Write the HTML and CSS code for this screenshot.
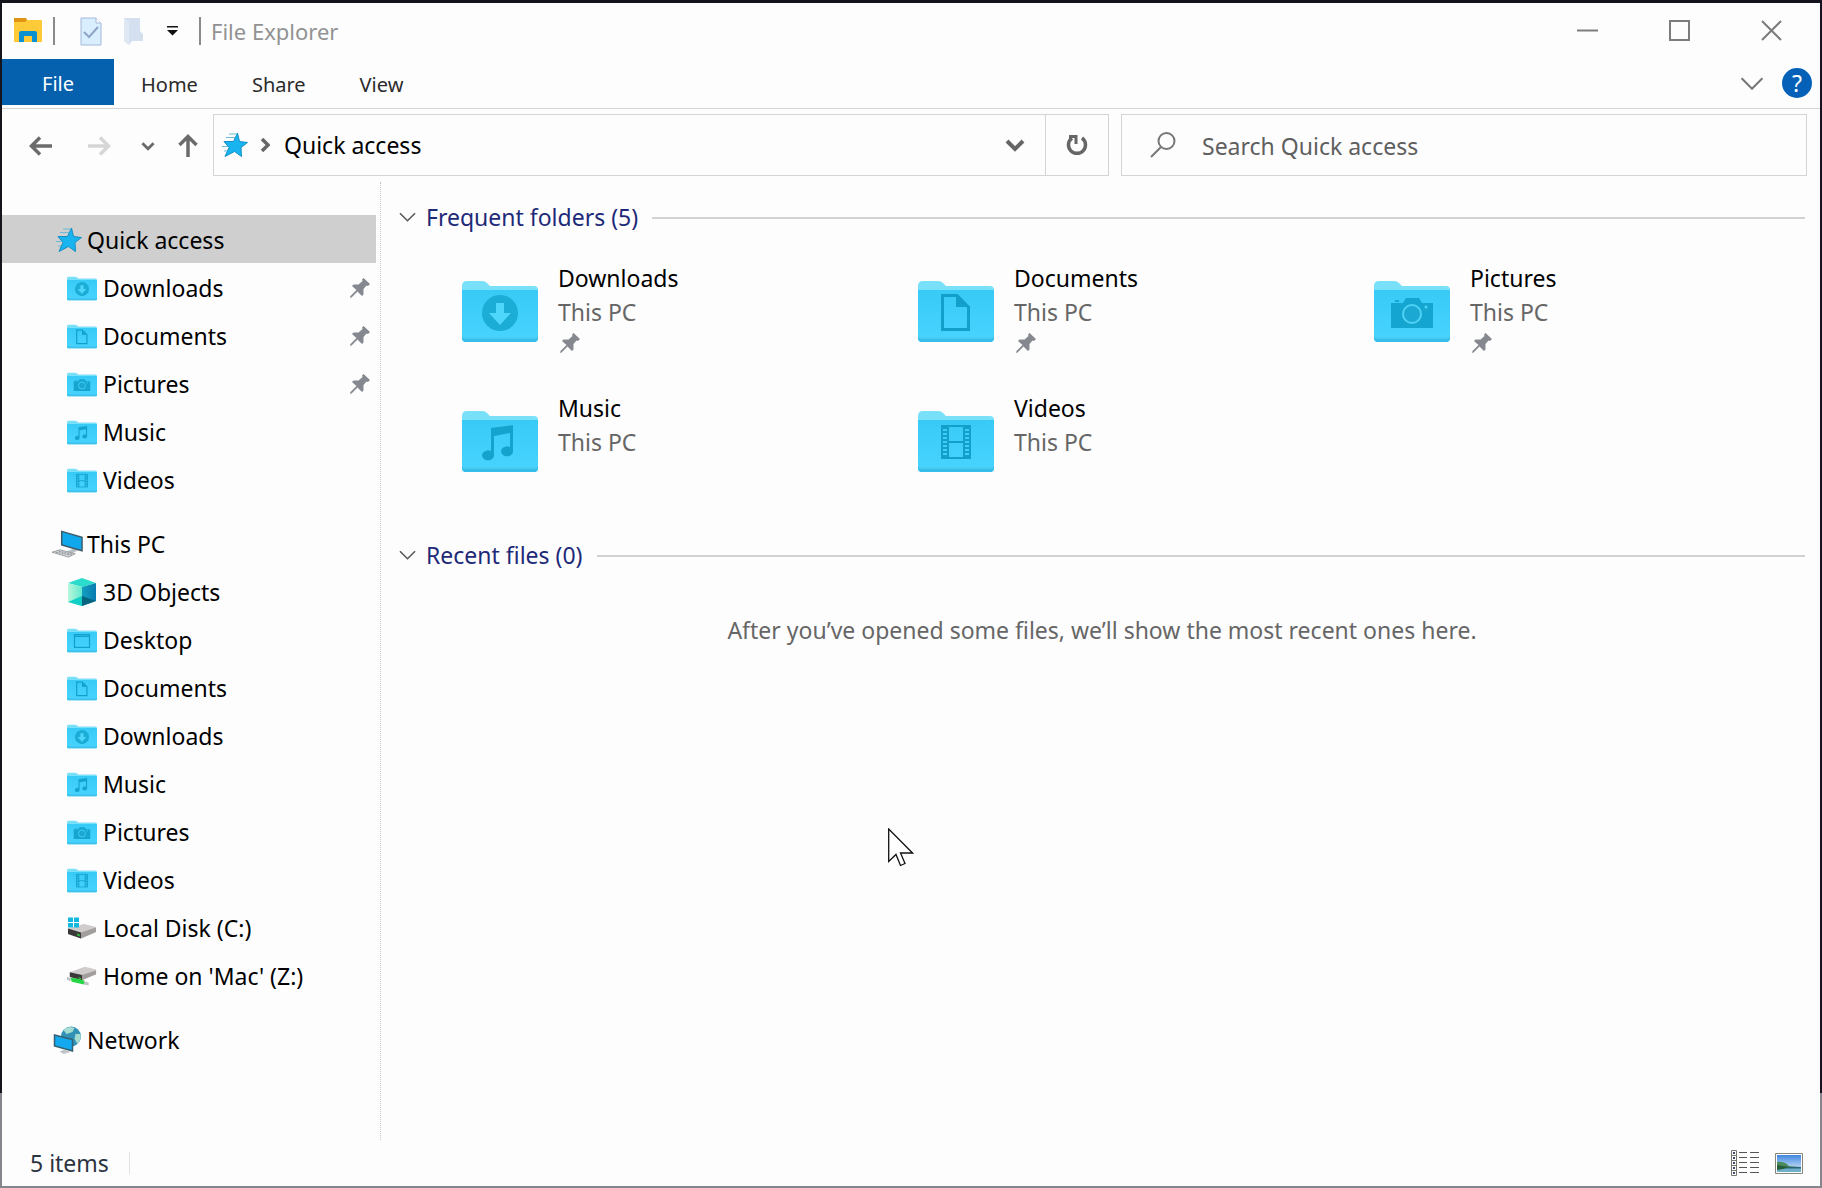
FILE: index.html
```html
<!DOCTYPE html>
<html lang="en">
<head>
<meta charset="utf-8">
<title>File Explorer</title>
<link rel="stylesheet" href="styles.css">
</head>
<body>
<svg class="defs" aria-hidden="true">
  <defs>
    <linearGradient id="front" x1="0" y1="0" x2="0" y2="1"><stop offset="0" stop-color="#38caf6"/><stop offset="1" stop-color="#48d4ff"/></linearGradient>
    <linearGradient id="sky" x1="0" y1="0" x2="0" y2="1"><stop offset="0" stop-color="#3f86e0"/><stop offset="1" stop-color="#e8f4fc"/></linearGradient>
    <linearGradient id="cubeL" x1="0" y1="0" x2="1" y2="0"><stop offset="0" stop-color="#b8f7dc"/><stop offset="1" stop-color="#63e9cf"/></linearGradient>
    <linearGradient id="cubeR" x1="0" y1="0" x2="1" y2="0"><stop offset="0" stop-color="#129fc0"/><stop offset="1" stop-color="#0a7bb0"/></linearGradient>
  </defs>
  <symbol id="folder" viewBox="0 0 76 61">
    <path d="M0 5Q0 0 5 0H20Q23 0 25 2L28 5H72Q76 5 76 9V30H0z" fill="#79e0fa"/>
    <path d="M0 9H76V57Q76 61 72 61H4Q0 61 0 57z" fill="url(#front)"/>
    <path d="M0 56H76V57Q76 61 72 61H4Q0 61 0 57z" fill="#36bdea"/>
    <path d="M1 57H75" stroke="#5bd9fb"/>
  </symbol>
  <symbol id="f-downloads" viewBox="0 0 76 61"><use href="#folder"/>
    <circle cx="38" cy="32" r="18" fill="#1badd6"/><path d="M34 22h8v10h7L38 44 27 32h7z" fill="#4fd6fb"/></symbol>
  <symbol id="f-documents" viewBox="0 0 76 61"><use href="#folder"/>
    <path d="M24.500 14.500H39L50.500 26V48.500H24.500z" fill="none" stroke="#129fca" stroke-width="3"/><path d="M38 15V26H50z" fill="#129fca"/></symbol>
  <symbol id="f-pictures" viewBox="0 0 76 61"><use href="#folder"/>
    <path d="M20 22H29L32 17H45L48 22H59V47H17V22zM21 19h4v2h-4z" fill="#14a6d0"/><circle cx="38" cy="33" r="9" fill="#1ba8d2" stroke="#4fd2f5" stroke-width="2"/><circle cx="52" cy="26" r="1.500" fill="#4fd2f5"/></symbol>
  <symbol id="f-music" viewBox="0 0 76 61"><use href="#folder"/>
    <path d="M29 17L51 14V41A6 5 0 1 1 48 36V22L32 25V45A6 5 0 1 1 29 40z" fill="#14a3cd"/></symbol>
  <symbol id="f-videos" viewBox="0 0 76 61"><use href="#folder"/>
    <path d="M24 15H52V47H24zM30 15V47M46 15V47M30 31H46" fill="none" stroke="#129fca" stroke-width="2"/><path d="M27 16V47M49 16V47" stroke="#129fca" stroke-width="6" stroke-dasharray="2 2"/></symbol>
  <symbol id="f-desktop" viewBox="0 0 76 61"><use href="#folder"/>
    <path d="M19 15.500H57V48H19zM19 20H57" fill="none" stroke="#129fca" stroke-width="3"/></symbol>
  <symbol id="pin" viewBox="0 0 20 20"><path d="M13.500 0L20 6 18 8 16.500 7.500 13.500 11 13.500 16.500 12 18 7.500 13.500 1.500 19.500 0 20 .5 18 6.500 12 2 8 3.500 6.500 8.500 6.500 12.500 3 12 1.500z" fill="#85898f"/></symbol>
  <symbol id="star" viewBox="0 0 28 26"><path d="M17.500 1L19.500 9.500 27.500 10.500 21 15.500 21.500 24.500 14.500 19.500 5 24.500 9 15.500 4 9.500H13.500z" fill="#19b4f0" stroke="#1190c4"/><path d="M9 2H17M6 5.500H15M2 14.500H8M4 19H7" stroke="#6bbbd9"/></symbol>
  <symbol id="pc" viewBox="0 0 32 28"><path d="M14 22L24 18 28 20 20 24z" fill="#b9bfc4"/><path d="M10 1L31 7V21L10 15z" fill="#10a8ec" stroke="#3f5866" stroke-width="1.500"/><path d="M0 22.500L8 20 24 24 17 27.500z" fill="#d3d6d8" stroke="#9a9fa3"/><path d="M4 22.500L20 25.500M7 21.500L21 24.500" stroke="#8e9499" stroke-dasharray="2 1"/></symbol>
  <symbol id="cube" viewBox="0 0 28 28"><path d="M14 0L28 5 14 9 0 5z" fill="#2bdbcb"/><path d="M0 5L14 9V28L0 24z" fill="url(#cubeL)"/><path d="M14 9L28 5V23L14 28z" fill="url(#cubeR)"/><path d="M0 24L14 18V28z" fill="#10cfc6"/><path d="M14 18L28 23 14 28z" fill="#07647f"/></symbol>
  <symbol id="disk" viewBox="0 0 30 22"><path d="M1 11.500L17 7 29 10V15L14 21.500 1 17z" fill="#cfcccb"/><path d="M1 11.500L14 15.500V21.500L1 17z" fill="#3a3838"/><path d="M14 15.500L29 10.500V15L14 21.500z" fill="#a19e9d"/><path d="M10 16.500l3 1v2l-3-1z" fill="#2fb93c"/><path d="M1 .5H6V5H1zM7 .5H12V5H7zM1 6H6V10.500H1zM7 6H12V10.500H7z" fill="#14b8de"/></symbol>
  <symbol id="netdisk" viewBox="0 0 32 22"><path d="M3 7L19 1 31 4V9L16 15 3 11z" fill="#cfcccb"/><path d="M3 7L16 10V15.500L3 12z" fill="#3a3838"/><path d="M16 10L31 5V9L16 15.500z" fill="#a19e9d"/><path d="M12 12l3 1v1.500l-3-1z" fill="#2fb93c"/><path d="M4 13L9 13.500 19 16 18 20 5 17z" fill="#22d643"/><path d="M0 12L4 13V16.500L0 15zM18 16.500L23 18V21L18 20z" fill="#bfc3bf"/></symbol>
  <symbol id="network" viewBox="0 0 28 28"><circle cx="17.500" cy="10.500" r="10" fill="#3192b5"/><path d="M10 4Q14-1 21 2L19 6 13 8zM22 8L27 8Q28 14 24 18L21 13z" fill="#a5dbd0"/><path d="M1 9L19 13.500V25L1 20z" fill="#12a9ee" stroke="#35606f" stroke-width="1.500"/><path d="M6 25.500L11 23.500 17 26 10 28z" fill="#bfc6ca"/></symbol>
  <symbol id="chev" viewBox="0 0 18 10"><path d="M1 1L9 9 17 1" fill="none" stroke="currentColor" stroke-width="1.600"/></symbol>
  <symbol id="chev-bold" viewBox="0 0 20 14"><path d="M2 3L10 11 18 3" fill="none" stroke="currentColor" stroke-width="4"/></symbol>
  <symbol id="arrow" viewBox="0 0 24 20"><path d="M23 10H3M11 1.500L2.500 10 11 18.500" fill="none" stroke="currentColor" stroke-width="3.500"/></symbol>
</svg>

<div class="window">
  <header class="titlebar">
    <svg class="app-icon" viewBox="0 0 28 26"><path d="M0 0H12L13 2H27Q28 2 28 3V24H0z" fill="#ffca38"/><path d="M0 0H12L13 2 11 4H0z" fill="#e09416"/><path d="M5 24V15Q5 13 7 13H21Q23 13 23 15V24H18V18H10V24z" fill="#0b91d2"/></svg>
    <span class="rule"></span>
    <button class="tool tool-properties" aria-label="Properties"><svg width="22" height="29" viewBox="0 0 22 29"><path d="M1 1H16L21 6V28H1z" fill="#d9efff" stroke="#a3b8d8"/><path d="M16 1V6H21" fill="#fff" stroke="#a3b8d8"/><path d="M4 15L9 20 18 10" fill="none" stroke="#8fa5c8" stroke-width="2"/></svg></button>
    <button class="tool" aria-label="New folder"><svg width="19" height="28" viewBox="0 0 19 28"><path d="M0 1H16V14L19 17V24H8L5 28 0 24z" fill="#d4e0ef"/><path d="M5 5V28L0 24V1z" fill="#dfe8f3"/></svg></button>
    <button class="tool tool-more" aria-label="Customize toolbar"><svg width="11" height="10" viewBox="0 0 11 10"><path d="M0 0H11V1.500H0zM0 4H11L5.500 9.500z" fill="#111"/></svg></button>
    <span class="rule"></span>
    <h1 class="title">File Explorer</h1>
    <div class="controls">
      <button aria-label="Minimize"><svg width="21" height="21" viewBox="0 0 21 21"><path d="M0 10.500H21"/></svg></button>
      <button aria-label="Maximize"><svg width="21" height="21" viewBox="0 0 21 21"><path d="M1 1H20V20H1z"/></svg></button>
      <button aria-label="Close"><svg width="21" height="21" viewBox="0 0 21 21"><path d="M1 1L20 20M20 1L1 20"/></svg></button>
    </div>
  </header>

  <nav class="ribbon" aria-label="Ribbon">
    <button class="tab tab-file">File</button>
    <button class="tab">Home</button>
    <button class="tab">Share</button>
    <button class="tab">View</button>
    <div class="ribbon-end">
      <button class="expand" aria-label="Expand ribbon"><svg width="24" height="13"><use href="#chev"/></svg></button>
      <button class="help" aria-label="Help">?</button>
    </div>
  </nav>

  <div class="toolbar">
    <div class="history">
      <button class="nav-btn" aria-label="Back"><svg width="24" height="20"><use href="#arrow"/></svg></button>
      <button class="nav-btn nav-off" aria-label="Forward"><svg class="flip" width="24" height="20"><use href="#arrow"/></svg></button>
      <button class="nav-btn nav-small" aria-label="Recent locations"><svg width="14" height="10"><use href="#chev-bold"/></svg></button>
      <button class="nav-btn nav-small" aria-label="Up"><svg class="up" width="24" height="20"><use href="#arrow"/></svg></button>
    </div>
    <div class="address">
      <svg width="28" height="26"><use href="#star"/></svg>
      <svg class="crumb-sep" width="10" height="14" viewBox="0 0 10 14"><path d="M2 1L8 7 2 13" fill="none" stroke="currentColor" stroke-width="3.500"/></svg>
      <a class="crumb" href="#">Quick access</a>
      <button class="drop" aria-label="Previous locations"><svg width="20" height="14"><use href="#chev-bold"/></svg></button>
      <button class="refresh" aria-label="Refresh"><svg width="22" height="24" viewBox="0 0 22 24"><path d="M16 5A8.500 8.500 0 1 1 6 5" fill="none" stroke="currentColor" stroke-width="3.500"/><path d="M3 3.500H10V11" fill="none" stroke="currentColor" stroke-width="3"/></svg></button>
    </div>
    <label class="search">
      <svg width="26" height="26" viewBox="0 0 26 26"><circle cx="16.500" cy="9" r="8" fill="none" stroke="#777" stroke-width="2"/><path d="M11 15L1 25" stroke="#777" stroke-width="2"/></svg>
      <input type="search" placeholder="Search Quick access" aria-label="Search Quick access">
    </label>
  </div>

  <div class="body">
    <nav class="sidebar" aria-label="Navigation pane">
      <ul>
        <li><a class="row root selected" href="#"><svg width="28" height="26"><use href="#star"/></svg>Quick access</a></li>
        <li><a class="row" href="#"><svg width="30" height="25"><use href="#f-downloads"/></svg>Downloads<svg class="pin" width="20" height="20"><use href="#pin"/></svg></a></li>
        <li><a class="row" href="#"><svg width="30" height="25"><use href="#f-documents"/></svg>Documents<svg class="pin" width="20" height="20"><use href="#pin"/></svg></a></li>
        <li><a class="row" href="#"><svg width="30" height="25"><use href="#f-pictures"/></svg>Pictures<svg class="pin" width="20" height="20"><use href="#pin"/></svg></a></li>
        <li><a class="row" href="#"><svg width="30" height="25"><use href="#f-music"/></svg>Music</a></li>
        <li><a class="row" href="#"><svg width="30" height="25"><use href="#f-videos"/></svg>Videos</a></li>
      </ul>
      <ul>
        <li><a class="row root wide" href="#"><svg width="31" height="28"><use href="#pc"/></svg>This PC</a></li>
        <li><a class="row" href="#"><svg width="30" height="28"><use href="#cube"/></svg>3D Objects</a></li>
        <li><a class="row" href="#"><svg width="30" height="25"><use href="#f-desktop"/></svg>Desktop</a></li>
        <li><a class="row" href="#"><svg width="30" height="25"><use href="#f-documents"/></svg>Documents</a></li>
        <li><a class="row" href="#"><svg width="30" height="25"><use href="#f-downloads"/></svg>Downloads</a></li>
        <li><a class="row" href="#"><svg width="30" height="25"><use href="#f-music"/></svg>Music</a></li>
        <li><a class="row" href="#"><svg width="30" height="25"><use href="#f-pictures"/></svg>Pictures</a></li>
        <li><a class="row" href="#"><svg width="30" height="25"><use href="#f-videos"/></svg>Videos</a></li>
        <li><a class="row" href="#"><svg width="30" height="22"><use href="#disk"/></svg>Local Disk (C:)</a></li>
        <li><a class="row" href="#"><svg width="30" height="22"><use href="#netdisk"/></svg>Home on 'Mac' (Z:)</a></li>
      </ul>
      <ul>
        <li><a class="row root wide" href="#"><svg width="28" height="28"><use href="#network"/></svg>Network</a></li>
      </ul>
    </nav>

    <main class="content">
      <section>
        <h2 class="group-head"><button><svg width="17" height="10"><use href="#chev"/></svg>Frequent folders (5)</button></h2>
        <div class="tiles">
          <a class="tile" href="#"><svg width="76" height="61"><use href="#f-downloads"/></svg><span class="info"><span>Downloads</span><span class="where">This PC</span><svg width="20" height="20"><use href="#pin"/></svg></span></a>
          <a class="tile" href="#"><svg width="76" height="61"><use href="#f-documents"/></svg><span class="info"><span>Documents</span><span class="where">This PC</span><svg width="20" height="20"><use href="#pin"/></svg></span></a>
          <a class="tile" href="#"><svg width="76" height="61"><use href="#f-pictures"/></svg><span class="info"><span>Pictures</span><span class="where">This PC</span><svg width="20" height="20"><use href="#pin"/></svg></span></a>
          <a class="tile" href="#"><svg width="76" height="61"><use href="#f-music"/></svg><span class="info"><span>Music</span><span class="where">This PC</span></span></a>
          <a class="tile" href="#"><svg width="76" height="61"><use href="#f-videos"/></svg><span class="info"><span>Videos</span><span class="where">This PC</span></span></a>
        </div>
      </section>
      <section>
        <h2 class="group-head"><button><svg width="17" height="10"><use href="#chev"/></svg>Recent files (0)</button></h2>
        <p class="empty">After you’ve opened some files, we’ll show the most recent ones here.</p>
      </section>
    </main>
  </div>

  <footer class="status">
    <span class="count">5 items</span>
    <div class="views">
      <button aria-label="Details view"><svg width="28" height="26" viewBox="0 0 28 26"><path d="M.5 .5H5.500V25.500H.5zM.5 5.500H5.500M.5 10.500H5.500M.5 15.500H5.500M.5 20.500H5.500" fill="none" stroke="#77776f"/><path d="M2 3H4M2 8H4M2 13H4M2 18H4M2 23H4" stroke="#3c4b66" stroke-width="2"/><path d="M8 2.500H16M19 2.500H28M8 7.500H16M19 7.500H28M8 12.500H16M19 12.500H28M8 17.500H16M19 17.500H28M8 22.500H16M19 22.500H28" stroke="#555"/></svg></button>
      <button aria-label="Large icons view"><svg width="28" height="21" viewBox="0 0 28 21"><path d="M.5 .5H27.500V20.500H.5z" fill="#fff" stroke="#85857c"/><path d="M2 2H26V19H2z" fill="url(#sky)"/><path d="M2 9Q9 8 14 13L26 14V15H2z" fill="#4b8a5a"/><path d="M2 14H26V19H2z" fill="#6fb0c8"/><path d="M2 14H26V15.500H2z" fill="#2c6484"/><path d="M2 12L14 14 8 16 2 17z" fill="#285d3c"/></svg></button>
    </div>
  </footer>
</div>
<svg class="cursor" viewBox="0 0 26 39" aria-hidden="true"><path d="M.7 1V33.500L8 26.500 12.500 37.500 17 35.500 12.500 25H24.500z" fill="#fff" stroke="#111" stroke-width="1.300"/></svg>
</body>
</html>
```
FILE: styles.css
```css
* { box-sizing: border-box; }

body {
  margin: 0;
  min-height: 100vh;
  display: flex;
  padding: 3px 2px 2px;
  background: linear-gradient(#14141c 92%, #85858c 92%);
  font: 23px/32px "Noto Sans", "Open Sans", sans-serif;
  color: #000;
}

button {
  display: flex;
  align-items: center;
  justify-content: center;
  padding: 0;
  border: 0;
  background: none;
  font: inherit;
  color: inherit;
}

a { color: inherit; text-decoration: none; }
svg { display: block; flex: none; }
ul { margin: 0; padding: 0; list-style: none; }
.defs { position: absolute; width: 0; height: 0; }

.window {
  flex: 1;
  min-width: 0;
  display: flex;
  flex-direction: column;
  background: #fdfdfe;
}

/* Title bar */
.titlebar {
  display: flex;
  align-items: center;
  height: 56px;
  padding-left: 12px;
}
.app-icon { width: 28px; height: 26px; }
.rule { width: 2px; height: 28px; margin-left: 11px; background: #8a8a8a; }
.tool { margin-left: 22px; }
.tool-properties { margin-left: 25px; }
.tool-more { margin: 0 10px 0 24px; }
.title { margin: 0 0 0 10px; font-size: 22px; font-weight: 400; color: #929292; }
.controls { display: flex; align-self: stretch; margin-left: auto; padding: 0 3px 2px 0; }
.controls button { width: 92px; }
.controls path { fill: none; stroke: #7c7c7c; stroke-width: 2; }

/* Ribbon tabs */
.ribbon {
  display: flex;
  height: 50px;
  padding-bottom: 3px;
  border-bottom: 1px solid #d4d4d6;
  font-size: 20px;
  color: #2b2b2b;
}
.tab { padding: 6px 27px 0; }
.tab-file { width: 112px; padding: 4px 0 0; background: #0560ae; color: #fff; }
.ribbon-end { display: flex; align-items: center; gap: 18px; margin-left: auto; padding: 2px 8px 0 0; }
.expand { color: #777; }
.help { width: 30px; height: 30px; border-radius: 50%; background: #0560b8; color: #fff; font-size: 23px; }

/* Address and search */
.toolbar {
  display: grid;
  grid-template-columns: 201px minmax(0, 896fr) minmax(0, 698fr);
  padding: 5px 13px 6px 10px;
}
.history { display: flex; padding-top: 2px; color: #6b6b6b; }
.nav-btn { width: 58px; }
.nav-small { width: 40px; }
.nav-off { color: #d6d6d6; }
.flip { transform: scaleX(-1); }
.up { transform: rotate(90deg); }
.address { display: flex; height: 62px; align-items: center; padding-left: 6px; border: 1px solid #d4d4d8; }
.crumb-sep { margin: 0 14px 0 12px; color: #666; }
.crumb { flex: 1; }
.drop, .refresh { align-self: stretch; color: #666; }
.drop { width: 60px; }
.refresh { width: 63px; border-left: 1px solid #d4d4d8; }
.search { display: flex; align-items: center; gap: 26px; margin-left: 12px; padding-left: 28px; border: 1px solid #d4d4d8; }
.search input { flex: 1; min-width: 0; padding: 2px 0 0; border: 0; outline: 0; background: none; font: inherit; }
.search input::placeholder { color: #5f5f5f; opacity: 1; }

/* Navigation pane */
.body { flex: 1; display: flex; }
.sidebar { width: 379px; padding-top: 33px; border-right: 1px dotted #c6c6d2; }
.sidebar ul { margin-bottom: 16px; }
.row { display: flex; align-items: center; gap: 6px; height: 48px; margin-right: 4px; padding: 2px 0 0 65px; }
.root { gap: 5px; padding-left: 52px; }
.root svg { width: 28px; }
.wide { gap: 4px; padding-left: 50px; }
.wide svg { width: 31px; }
.selected { background: #cfcfcf; }
.pin { margin-left: auto; margin-right: 6px; }

/* Folder view */
.content { flex: 1; min-width: 0; padding: 19px 15px 0 18px; }
.group-head {
  display: flex;
  align-items: center;
  gap: 14px;
  margin: 0;
  font-size: 23px;
  font-weight: 400;
  color: #1e2a78;
}
.group-head::after { content: ""; flex: 1; height: 2px; margin-top: 2px; background: #d2d2d4; }
.group-head button { gap: 10px; }
.group-head svg { color: #555; }
.tiles {
  display: grid;
  grid-template-columns: repeat(auto-fill, 336px);
  grid-auto-rows: 130px;
  column-gap: 120px;
  padding: 28px 0 18px 63px;
}
.tile { display: flex; align-items: flex-start; gap: 20px; }
.tile > svg { margin-top: 20px; }
.info { display: flex; flex-direction: column; line-height: 34px; }
.info svg { margin: 4px 0 0 2px; }
.where { color: #666; }
.empty { margin: 43px 0 0; text-align: center; color: #666; }

/* Status bar */
.status { display: flex; align-items: center; justify-content: space-between; height: 46px; padding: 0 17px 0 28px; color: #2c3440; }
.count { padding-right: 20px; border-right: 1px solid #e2e2e6; line-height: 22px; }
.views { display: flex; align-items: center; gap: 16px; }

.cursor { position: absolute; left: 888px; top: 828px; width: 26px; height: 39px; }
```
